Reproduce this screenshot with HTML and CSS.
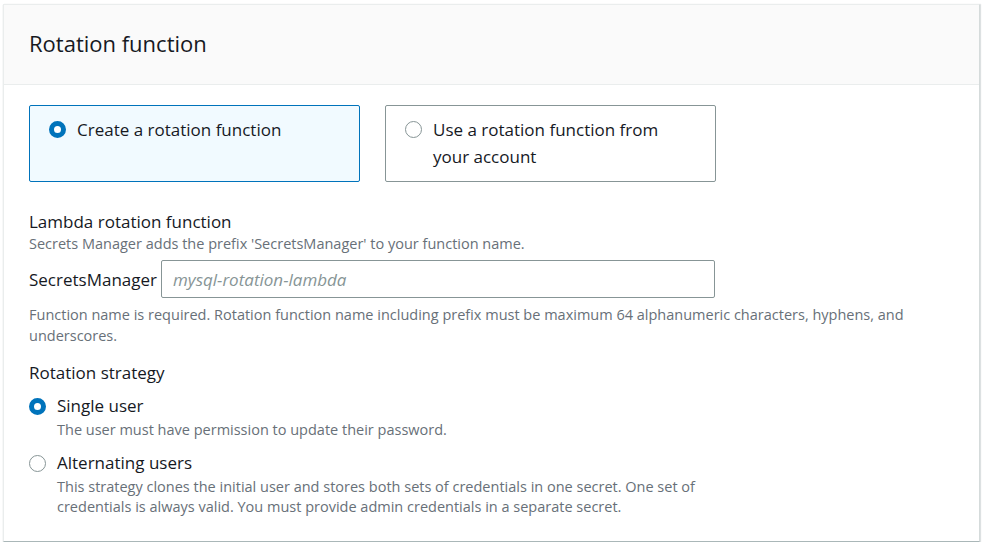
FILE: index.html
```html
<!DOCTYPE html>
<html lang="en">
<head>
    <meta charset="UTF-8">
    <meta name="viewport" content="width=device-width, initial-scale=1.0">
    <title>Rotation function</title>
    <link rel="stylesheet" href="styles.css">
</head>
<body>
    <div class="panel">
        <div class="panel-header">
            <h2>Rotation function</h2>
        </div>
        <div class="panel-body">
            <div class="tiles">
                <label class="tile selected">
                    <span class="radio checked"></span>
                    <span class="tile-text">Create a rotation function</span>
                </label>
                <label class="tile">
                    <span class="radio"></span>
                    <span class="tile-text">Use a rotation function from your account</span>
                </label>
            </div>

            <div class="field">
                <div class="field-label">Lambda rotation function</div>
                <div class="field-desc">Secrets Manager adds the prefix 'SecretsManager' to your function name.</div>
                <div class="prefix-row">
                    <span class="prefix">SecretsManager</span>
                    <div class="input">mysql-rotation-lambda</div>
                </div>
                <div class="constraint">Function name is required. Rotation function name including prefix must be maximum 64 alphanumeric characters, hyphens, and underscores.</div>
            </div>

            <div class="field strategy">
                <div class="field-label">Rotation strategy</div>
                <div class="option">
                    <div class="option-row">
                        <span class="radio checked"></span>
                        <span class="option-label">Single user</span>
                    </div>
                    <div class="option-desc">The user must have permission to update their password.</div>
                </div>
                <div class="option">
                    <div class="option-row">
                        <span class="radio"></span>
                        <span class="option-label">Alternating users</span>
                    </div>
                    <div class="option-desc">This strategy clones the initial user and stores both sets of credentials in one secret. One set of credentials is always valid. You must provide admin credentials in a separate secret.</div>
                </div>
            </div>
        </div>
    </div>
</body>
</html>
```

FILE: styles.css
```css
body {
    margin: 0;
    font-family: "Open Sans", "Noto Sans", sans-serif;
    color: #16191f;
    background-color: #fff;
}

.panel {
    margin: 4px 0 0 3px;
    width: 977px;
    height: 538px;
    box-sizing: border-box;
    border: 1px solid #eaeded;
    border-right-color: #d5dbdb;
    border-bottom-color: #aab7b8;
    box-shadow: 0 1px 1px 0 rgba(0, 28, 36, 0.2), 1px 0 1px 0 rgba(0, 28, 36, 0.1);
    background-color: #fff;
}

.panel-header {
    background-color: #fafafa;
    border-bottom: 1px solid #eaeded;
    padding: 24px 25px 27px;
}

.panel-header h2 {
    margin: 0;
    font-size: 22px;
    line-height: 28px;
    font-weight: 400;
}

.panel-body {
    padding: 20px 25px 0;
}

.tiles {
    display: grid;
    grid-template-columns: 331px 331px;
    gap: 25px;
}

.tile {
    display: flex;
    align-items: flex-start;
    border: 1px solid #879596;
    border-radius: 2px;
    padding: 10px 20px 11px 19px;
    font-size: 17px;
    line-height: 27px;
}

.tile.selected {
    background-color: #f1faff;
    border-color: #0073bb;
}

.tile .radio {
    margin: 5px 11px 0 0;
}

.tile-text {
    flex: 1;
}

.radio {
    flex: none;
    display: inline-block;
    width: 17px;
    height: 17px;
    box-sizing: border-box;
    border: 1.5px solid #879596;
    border-radius: 50%;
    background-color: #fff;
}

.radio.checked {
    border: 5.5px solid #0073bb;
}

.field {
    margin-top: 28px;
}

.field-label {
    font-size: 17px;
    line-height: 24px;
}

.field-desc {
    font-size: 14.5px;
    line-height: 20px;
    color: #687078;
}

.prefix-row {
    display: flex;
    align-items: center;
    margin-top: 6px;
    width: 686px;
}

.prefix {
    font-size: 17px;
    margin-right: 4px;
}

.input {
    flex: 1;
    height: 38px;
    box-sizing: border-box;
    border: 1px solid #879596;
    border-radius: 2px;
    padding: 0 11px;
    display: flex;
    align-items: center;
    font-size: 17px;
    font-style: italic;
    color: #879596;
}

.constraint {
    margin-top: 6px;
    font-size: 14.5px;
    line-height: 21px;
    color: #687078;
}

.strategy {
    margin-top: 15px;
}

.option {
    margin-top: 9px;
    width: 686px;
}

.option + .option {
    margin-top: 11px;
}

.option-row {
    display: flex;
    align-items: center;
    font-size: 17px;
    line-height: 24px;
}

.option-row .radio {
    margin-right: 11px;
}

.option-desc {
    margin-left: 28px;
    margin-top: 2px;
    font-size: 14.5px;
    line-height: 20px;
    color: #687078;
}
```
